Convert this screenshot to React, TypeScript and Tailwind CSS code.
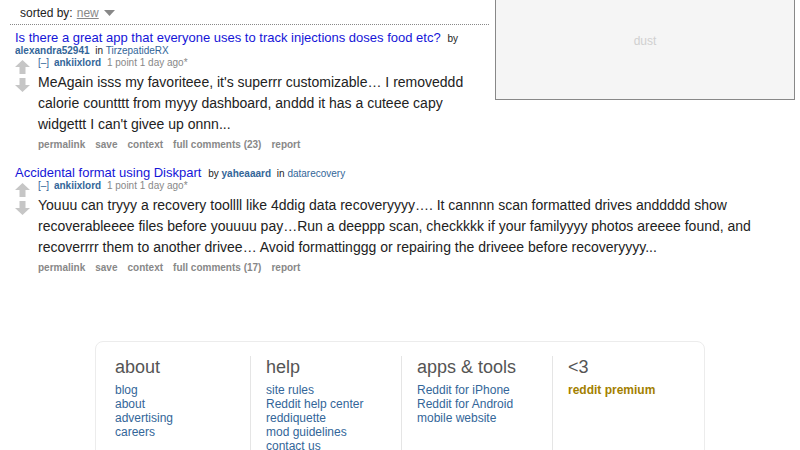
import React from "react";

function Arrows() {
  return (
    <div className="absolute left-0 top-[3px] flex flex-col gap-[4px]">
      <svg width="15" height="14" viewBox="0 0 15 14">
        <polygon points="7.5,0 15,7 10.5,7 10.5,14 4.5,14 4.5,7 0,7" fill="#c6c6c6" />
      </svg>
      <svg width="15" height="14" viewBox="0 0 15 14">
        <polygon points="7.5,14 15,7 10.5,7 10.5,0 4.5,0 4.5,7 0,7" fill="#c6c6c6" />
      </svg>
    </div>
  );
}

function Entry({
  title,
  author,
  sub,
  lines,
  count,
}: {
  title: string;
  author: string;
  sub: string;
  lines: React.ReactNode;
  count: number;
}) {
  return (
    <div className="flow-root pl-[5px]">
      <div className="text-[10px] leading-[12px] text-[#222]">
        <a className="text-[#1515d8] text-[13px] leading-[12px]">{title}</a>{" "}
        <span className="ml-[4px]">by</span>{" "}
        <a className="font-bold text-[#369]">{author}</a>{" "}
        <span className="ml-[3px]">in</span>{" "}
        <a className="text-[#369]">{sub}</a>
      </div>
      <div className="relative pl-[23px]">
        <Arrows />
        <div className="text-[10px] leading-[12px]">
          <span className="text-[#369]">[–]</span>{" "}
          <span className="font-bold text-[#369] ml-[2px]">ankiixlord</span>{" "}
          <span className="text-[#888] ml-[3px]">1 point 1 day ago*</span>
        </div>
        <div className="text-[14px] leading-[21px] text-[#222] mt-[3px] mr-[20px]">{lines}</div>
        <div className="flex gap-[10px] text-[10px] font-bold text-[#888] mt-[4px] leading-[12px]">
          <span>permalink</span>
          <span>save</span>
          <span>context</span>
          <span>full comments ({count})</span>
          <span>report</span>
        </div>
      </div>
    </div>
  );
}

function FooterCol({
  title,
  links,
  first,
  gold,
}: {
  title: string;
  links: string[];
  first?: boolean;
  gold?: boolean;
}) {
  return (
    <div className={first ? "w-[154px] pl-[19px]" : "w-[151px] pl-[15px] border-l border-[#e5e5e5]"}>
      <div className="text-[18px] leading-[20px] text-[#555] mb-[6px] mt-[1px]">{title}</div>
      {links.map((l) => (
        <div
          key={l}
          className={
            gold
              ? "text-[12px] leading-[14px] font-bold text-[#a37f00]"
              : "text-[12px] leading-[14px] text-[#369]"
          }
        >
          {l}
        </div>
      ))}
    </div>
  );
}

export default function App() {
  return (
    <div className="w-[800px] h-[450px] overflow-hidden bg-white font-['Liberation_Sans',Arial,sans-serif]">
      <div className="float-right w-[300px] h-[100px] mr-[5px] ml-[6px] border border-t-0 border-[#888] bg-[#f5f5f5] text-center text-[12px] text-[#d0d0d0] pt-[32px]">
        dust
      </div>
      <div className="pl-[10px]">
        <div className="h-[25px] border-b border-dotted border-[#888] pl-[10px] pt-[1px] text-[12px] leading-[14px] text-[#222] flex items-center gap-[4px]">
          <span>sorted by:</span>
          <span className="underline text-[#888]">new</span>
          <svg width="11" height="6" viewBox="0 0 11 6" className="ml-[1px] mt-[1px]">
            <polygon points="0,0 11,0 5.5,6" fill="#888" />
          </svg>
        </div>
        <div className="pt-[7px]">
          <Entry
            title="Is there a great app that everyone uses to track injections doses food etc?"
            author="alexandra52941"
            sub="TirzepatideRX"
            count={23}
            lines={
              <>
                MeAgain isss my favoriteee, it's superrr customizable… I removeddd calorie countttt from myyy dashboard, anddd it has a cuteee capy widgettt I can't givee up onnn...
              </>
            }
          />
          <div className="h-[16px]" />
          <Entry
            title="Accidental format using Diskpart"
            author="yaheaaard"
            sub="datarecovery"
            count={17}
            lines={
              <>
                Youuu can tryyy a recovery toollll like 4ddig data recoveryyyy…. It cannnn scan formatted drives anddddd show recoverableeee files before youuuu pay…Run a deeppp scan, checkkkk if your familyyyy photos areeee found, and recoverrrr them to another drivee… Avoid formattinggg or repairing the driveee before recoveryyyy...
              </>
            }
          />
        </div>
      </div>
      <div className="clear-both pt-[67px]">
        <div className="mx-auto w-[610px] h-[200px] border border-[#ececec] rounded-[8px] pt-[14px] flex">
          <FooterCol first title="about" links={["blog", "about", "advertising", "careers"]} />
          <FooterCol
            title="help"
            links={["site rules", "Reddit help center", "reddiquette", "mod guidelines", "contact us"]}
          />
          <FooterCol title="apps & tools" links={["Reddit for iPhone", "Reddit for Android", "mobile website"]} />
          <FooterCol title="<3" links={["reddit premium"]} gold />
        </div>
      </div>
    </div>
  );
}
